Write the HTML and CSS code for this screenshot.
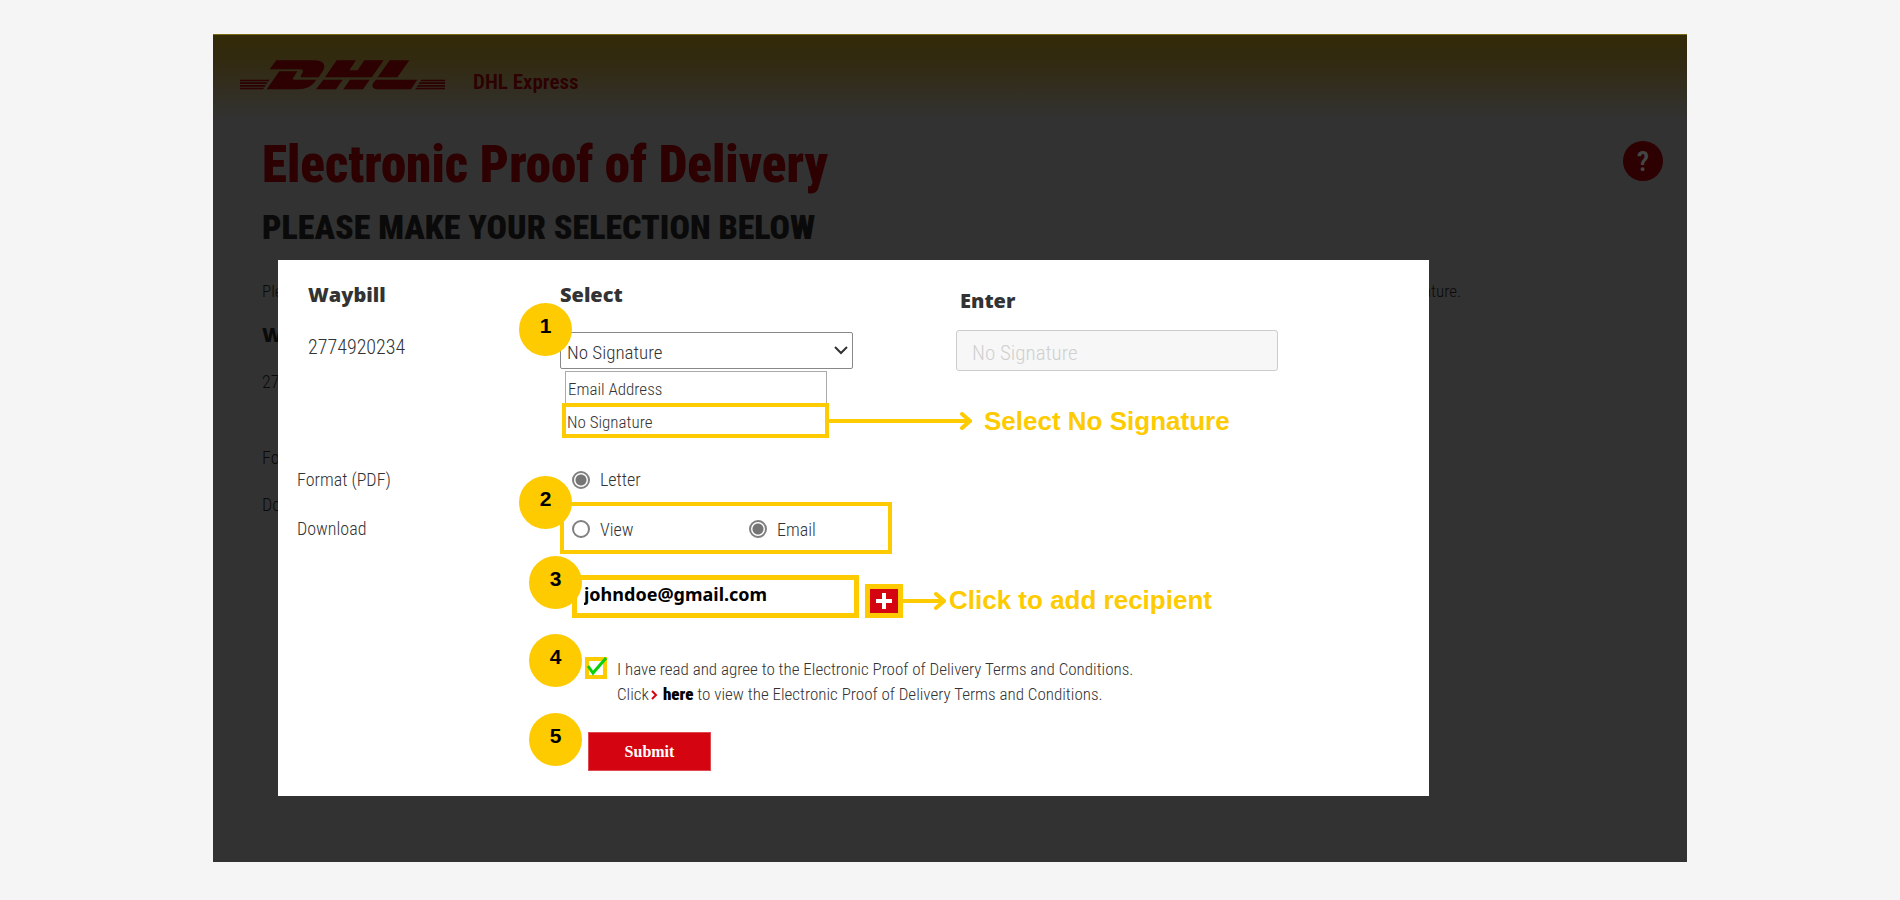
FILE: index.html
```html
<!DOCTYPE html>
<html lang="en">
  <head>
    <meta charset="utf-8">
    <title>DHL Express - Electronic Proof of Delivery</title>
    <link rel="stylesheet" href="styles.css">
  </head>
  <body>
    <div class="page">
      <header class="page-header">
        <svg class="logo" viewBox="0 0 615 88" role="img" aria-label="DHL">
          <path d="M109 0H226Q262 4 250 30L236 51H184Q180 48 186 40Q194 27 180 27H89Z"/>
          <path d="M118 33H172L158 55Q158 58 164 58H229Q212 87 172 87H80Z"/>
          <path d="M290 0H348L328 30H353L373 0H431L395 51H255Z"/>
          <path d="M250 58H308L288 87H228ZM330 58H389L369 87H310Z"/>
          <path d="M449 0H508L472 51H413ZM408 58H532L513 87H410Q394 84 398 70Z"/>
          <path d="M0 58H89L85 63H0ZM0 66H83L79 71H0ZM0 74H78L74 79H0ZM0 82H73L69 87H0Z"/>
          <path d="M545 58H615V63H541ZM539 66H615V71H535ZM534 74H615V79H530ZM529 82H615V87H525Z"/>
        </svg>
        <span class="brand">DHL Express</span>
      </header>
      <main class="page-body">
        <div class="title-row">
          <h1>Electronic Proof of Delivery</h1>
          <button type="button" class="help" aria-label="Help">?</button>
        </div>
        <h2>PLEASE MAKE YOUR SELECTION BELOW</h2>
        <div class="intro"><span>Please</span><span>Signature.</span></div>
        <h3>Waybill</h3>
        <p class="number">2774920234</p>
        <p class="format">Format (PDF)</p>
        <p class="download">Download</p>
      </main>

      <form class="modal" onsubmit="return false">
        <div class="row head-row">
          <h3 class="indent">Waybill</h3>
          <h3>Select</h3>
          <h3 class="low">Enter</h3>
        </div>

        <div class="row select-row">
          <span class="indent waybill">2774920234</span>
          <div class="field">
            <span class="badge">1</span>
            <select class="select" aria-label="Select">
              <option>No Signature</option>
              <option>Email Address</option>
            </select>
            <svg class="chevron" viewBox="0 0 14 9"><path d="M1 1L7 7L13 1"/></svg>
            <div class="options">
              <button type="button" class="option">Email Address</button>
              <div class="option-line">
                <button type="button" class="option picked">No Signature</button>
                <svg class="arrow" viewBox="0 0 143 18"><path d="M0 9H140M133 2L141 9L133 16"/></svg>
                <span class="hint">Select No Signature</span>
              </div>
            </div>
          </div>
          <input class="enter" type="text" placeholder="No Signature" aria-label="Enter" disabled>
        </div>

        <div class="row format-row">
          <span>Format (PDF)</span>
          <label class="choice"><input type="radio" name="format" checked>Letter</label>
        </div>

        <div class="row download-row">
          <span>Download</span>
          <div class="choices">
            <span class="badge">2</span>
            <label class="choice"><input type="radio" name="download">View</label>
            <label class="choice"><input type="radio" name="download" checked>Email</label>
          </div>
        </div>

        <div class="recipient">
          <span class="badge">3</span>
          <input class="email" type="text" value="johndoe@gmail.com" aria-label="Email address">
          <button type="button" class="add" aria-label="Add recipient">
            <svg viewBox="0 0 16 16"><path d="M8 0V16M0 8H16"/></svg>
          </button>
          <svg class="arrow short" viewBox="0 0 43 18"><path d="M0 9H40M33 2L41 9L33 16"/></svg>
          <span class="hint">Click to add recipient</span>
        </div>

        <div class="terms">
          <span class="badge">4</span>
          <span class="check">
            <input type="checkbox" id="agree" checked>
            <svg viewBox="0 0 22 22"><path d="M3 9L8 16L21 1"/></svg>
          </span>
          <div class="terms-text">
            <label for="agree">I have read and agree to the Electronic Proof of Delivery Terms and Conditions.</label>
            <p>Click<svg class="caret" viewBox="0 0 7 10"><path d="M1 1L5 5L1 9"/></svg><a href="#">here</a> to view the Electronic Proof of Delivery Terms and Conditions.</p>
          </div>
        </div>

        <div class="submit-row">
          <span class="badge">5</span>
          <button type="submit" class="submit">Submit</button>
        </div>
      </form>
    </div>
  </body>
</html>
```
FILE: styles.css
```css
* {
  box-sizing: border-box;
  margin: 0;
  padding: 0;
}

body {
  min-height: 100vh;
  display: flex;
  padding: 34px 213px 38px;
  background: #f5f5f5;
  color: #333;
  font-family: "Roboto Condensed", Roboto, sans-serif;
  font-size: 18px;
  font-weight: 300;
}

button,
input,
select {
  font: inherit;
  color: inherit;
}

.page {
  position: relative;
  flex: 1;
  background: #323232;
  color: #0a0a0a;
  border-top: 1px solid #7a6a14;
}

/* header */
.page-header {
  display: flex;
  align-items: flex-start;
  height: 85px;
  padding: 25px 27px 0;
  gap: 28px;
  background: linear-gradient(#332a08, #322a10 30%, #323232);
  color: #2d0002;
}

.logo {
  width: 205px;
  height: 30px;
  fill: #2d0002;
}

.brand {
  margin-top: 8px;
  font-size: 21px;
  font-weight: 600;
  line-height: 28px;
}

/* page behind the dialog */
.page-body {
  padding: 0 24px 0 49px;
}

.title-row {
  display: flex;
  justify-content: space-between;
  align-items: flex-start;
  padding-top: 15px;
}

h1 {
  font-size: 51px;
  font-weight: 900;
  line-height: 60px;
  color: #2d0002;
}

h2 {
  margin-top: 12px;
  font-size: 34px;
  font-weight: 900;
  line-height: 40px;
}

h3 {
  font-family: "Open Sans", sans-serif;
  font-size: 20px;
  font-weight: 800;
  line-height: 28px;
}

.help {
  margin-top: 6px;
  width: 40px;
  height: 40px;
  border: none;
  border-radius: 50%;
  background: #2d0002;
  color: #454545;
  font-size: 28px;
  font-weight: 600;
}

.intro {
  display: flex;
  justify-content: space-between;
  margin-top: 32px;
  padding-right: 202px;
  font-size: 17px;
  line-height: 24px;
}

.page-body h3 {
  margin-top: 18px;
}

.number {
  margin-top: 22px;
}

.format {
  margin-top: 55px;
}

.download {
  margin-top: 26px;
}

/* dialog */
.modal {
  position: absolute;
  top: 225px;
  left: 65px;
  right: 258px;
  padding: 21px 19px 25px;
  background: #fff;
  color: #333;
}

.row {
  display: grid;
  grid-template-columns: 263px 396px 1fr;
  align-items: start;
}

.indent {
  padding-left: 11px;
}

.head-row .low {
  padding: 6px 0 0 4px;
}

.select-row {
  height: 121px;
  margin-top: 14px;
}

.waybill {
  margin-top: 4px;
  font-size: 20px;
  line-height: 28px;
}

.field {
  position: relative;
  width: 293px;
  margin-top: 3px;
}

.select {
  display: block;
  width: 100%;
  height: 37px;
  padding: 4px 0 0 6px;
  border: 1px solid #888;
  border-radius: 2px;
  background: #fff;
  appearance: none;
  font-size: 19px;
}

.chevron {
  position: absolute;
  top: 14px;
  right: 5px;
  width: 14px;
  height: 9px;
  fill: none;
  stroke: #333;
  stroke-width: 2;
}

.options {
  padding: 2px 0 0 2px;
}

.option {
  display: block;
  width: 262px;
  height: 32px;
  margin-left: 3px;
  padding: 2px 0 0 2px;
  border: 1px solid #aaa;
  border-bottom: none;
  background: #fff;
  font-size: 17px;
  text-align: left;
}

.option-line {
  display: flex;
  align-items: center;
}

.picked {
  flex: none;
  width: 267px;
  height: 35px;
  margin: 0;
  padding-left: 1px;
  border: 4px solid #fecb00;
}

.arrow {
  flex: none;
  width: 143px;
  height: 18px;
  fill: none;
  stroke: #fecb00;
  stroke-width: 4;
  stroke-linecap: round;
}

.short {
  width: 43px;
}

.hint {
  margin-left: 12px;
  color: #fecb00;
  font-family: "Liberation Sans", Arial, sans-serif;
  font-size: 26px;
  font-weight: 700;
  line-height: 30px;
  white-space: nowrap;
}

.enter {
  width: 322px;
  height: 41px;
  margin-top: 1px;
  padding: 4px 0 0 15px;
  border: 1px solid #ccc;
  border-radius: 3px;
  background: #f7f7f7;
  font-size: 21px;
}

.enter::placeholder {
  color: #d0d0d0;
}

.format-row {
  padding-top: 16px;
  line-height: 28px;
}

.choice {
  display: flex;
  align-items: center;
  gap: 10px;
}

.choice input {
  width: 18px;
  height: 18px;
  appearance: none;
  border: 2px solid #808080;
  border-radius: 50%;
}

.choice input:checked {
  background: radial-gradient(#757575 5px, #fff 6px);
}

.format-row .choice {
  padding-left: 12px;
}

.download-row {
  align-items: center;
  margin-top: 8px;
}

.choices {
  position: relative;
  display: grid;
  grid-template-columns: 177px 1fr;
  align-items: center;
  width: 332px;
  height: 52px;
  padding: 2px 0 0 8px;
  border: 4px solid #fecb00;
}

.badge {
  position: absolute;
  top: -29px;
  left: -41px;
  z-index: 1;
  width: 53px;
  height: 53px;
  border-radius: 50%;
  background: #fecb00;
  color: #000;
  font-family: "Liberation Sans", Arial, sans-serif;
  font-size: 21px;
  font-weight: 700;
  line-height: 46px;
  text-align: center;
}

.choices .badge {
  top: -30px;
  left: -45px;
}

/* recipient */
.recipient {
  position: relative;
  display: flex;
  align-items: flex-end;
  margin: 21px 0 0 275px;
}

.recipient .badge,
.terms .badge,
.submit-row .badge {
  top: -19px;
  left: -43px;
}

.email {
  width: 287px;
  height: 43px;
  padding: 0 7px 6px;
  border: 5px solid #fecb00;
  background: #fff;
  color: #000;
  font-family: "Noto Sans", sans-serif;
  font-size: 18px;
  font-weight: 700;
}

.add {
  display: flex;
  align-items: center;
  justify-content: center;
  width: 38px;
  height: 34px;
  margin-left: 6px;
  border: 5px solid #fecb00;
  background: #d40511;
}

.add svg {
  width: 16px;
  height: 16px;
  stroke: #fff;
  stroke-width: 4;
}

.recipient .arrow {
  margin-bottom: 8px;
}

.recipient .hint {
  margin: 0 0 3px 3px;
}

/* terms */
.terms {
  position: relative;
  display: flex;
  align-items: flex-start;
  gap: 10px;
  margin: 39px 0 0 288px;
  font-size: 17px;
  line-height: 25px;
}

.terms .badge {
  top: -23px;
  left: -56px;
}

.check {
  position: relative;
  width: 22px;
  height: 22px;
}

.check input {
  display: block;
  width: 22px;
  height: 22px;
  appearance: none;
  border: 4px solid #fecb00;
  background: #fff;
}

.check svg {
  position: absolute;
  inset: 0;
  fill: none;
  stroke: #0ccf0c;
  stroke-width: 3;
  pointer-events: none;
}

.caret {
  width: 7px;
  height: 10px;
  margin: 0 5px 0 2px;
  fill: none;
  stroke: #d40511;
  stroke-width: 2;
}

.terms a {
  color: #000;
  font-weight: 900;
  text-decoration: none;
}

.submit-row {
  position: relative;
  margin: 25px 0 0 291px;
}

.submit-row .badge {
  left: -59px;
}

.submit {
  display: block;
  width: 123px;
  height: 39px;
  border: 1px solid #dd4a50;
  background: #d40511;
  color: #fff;
  font-family: "Liberation Serif", "Times New Roman", serif;
  font-size: 16px;
  font-weight: 700;
}
```
